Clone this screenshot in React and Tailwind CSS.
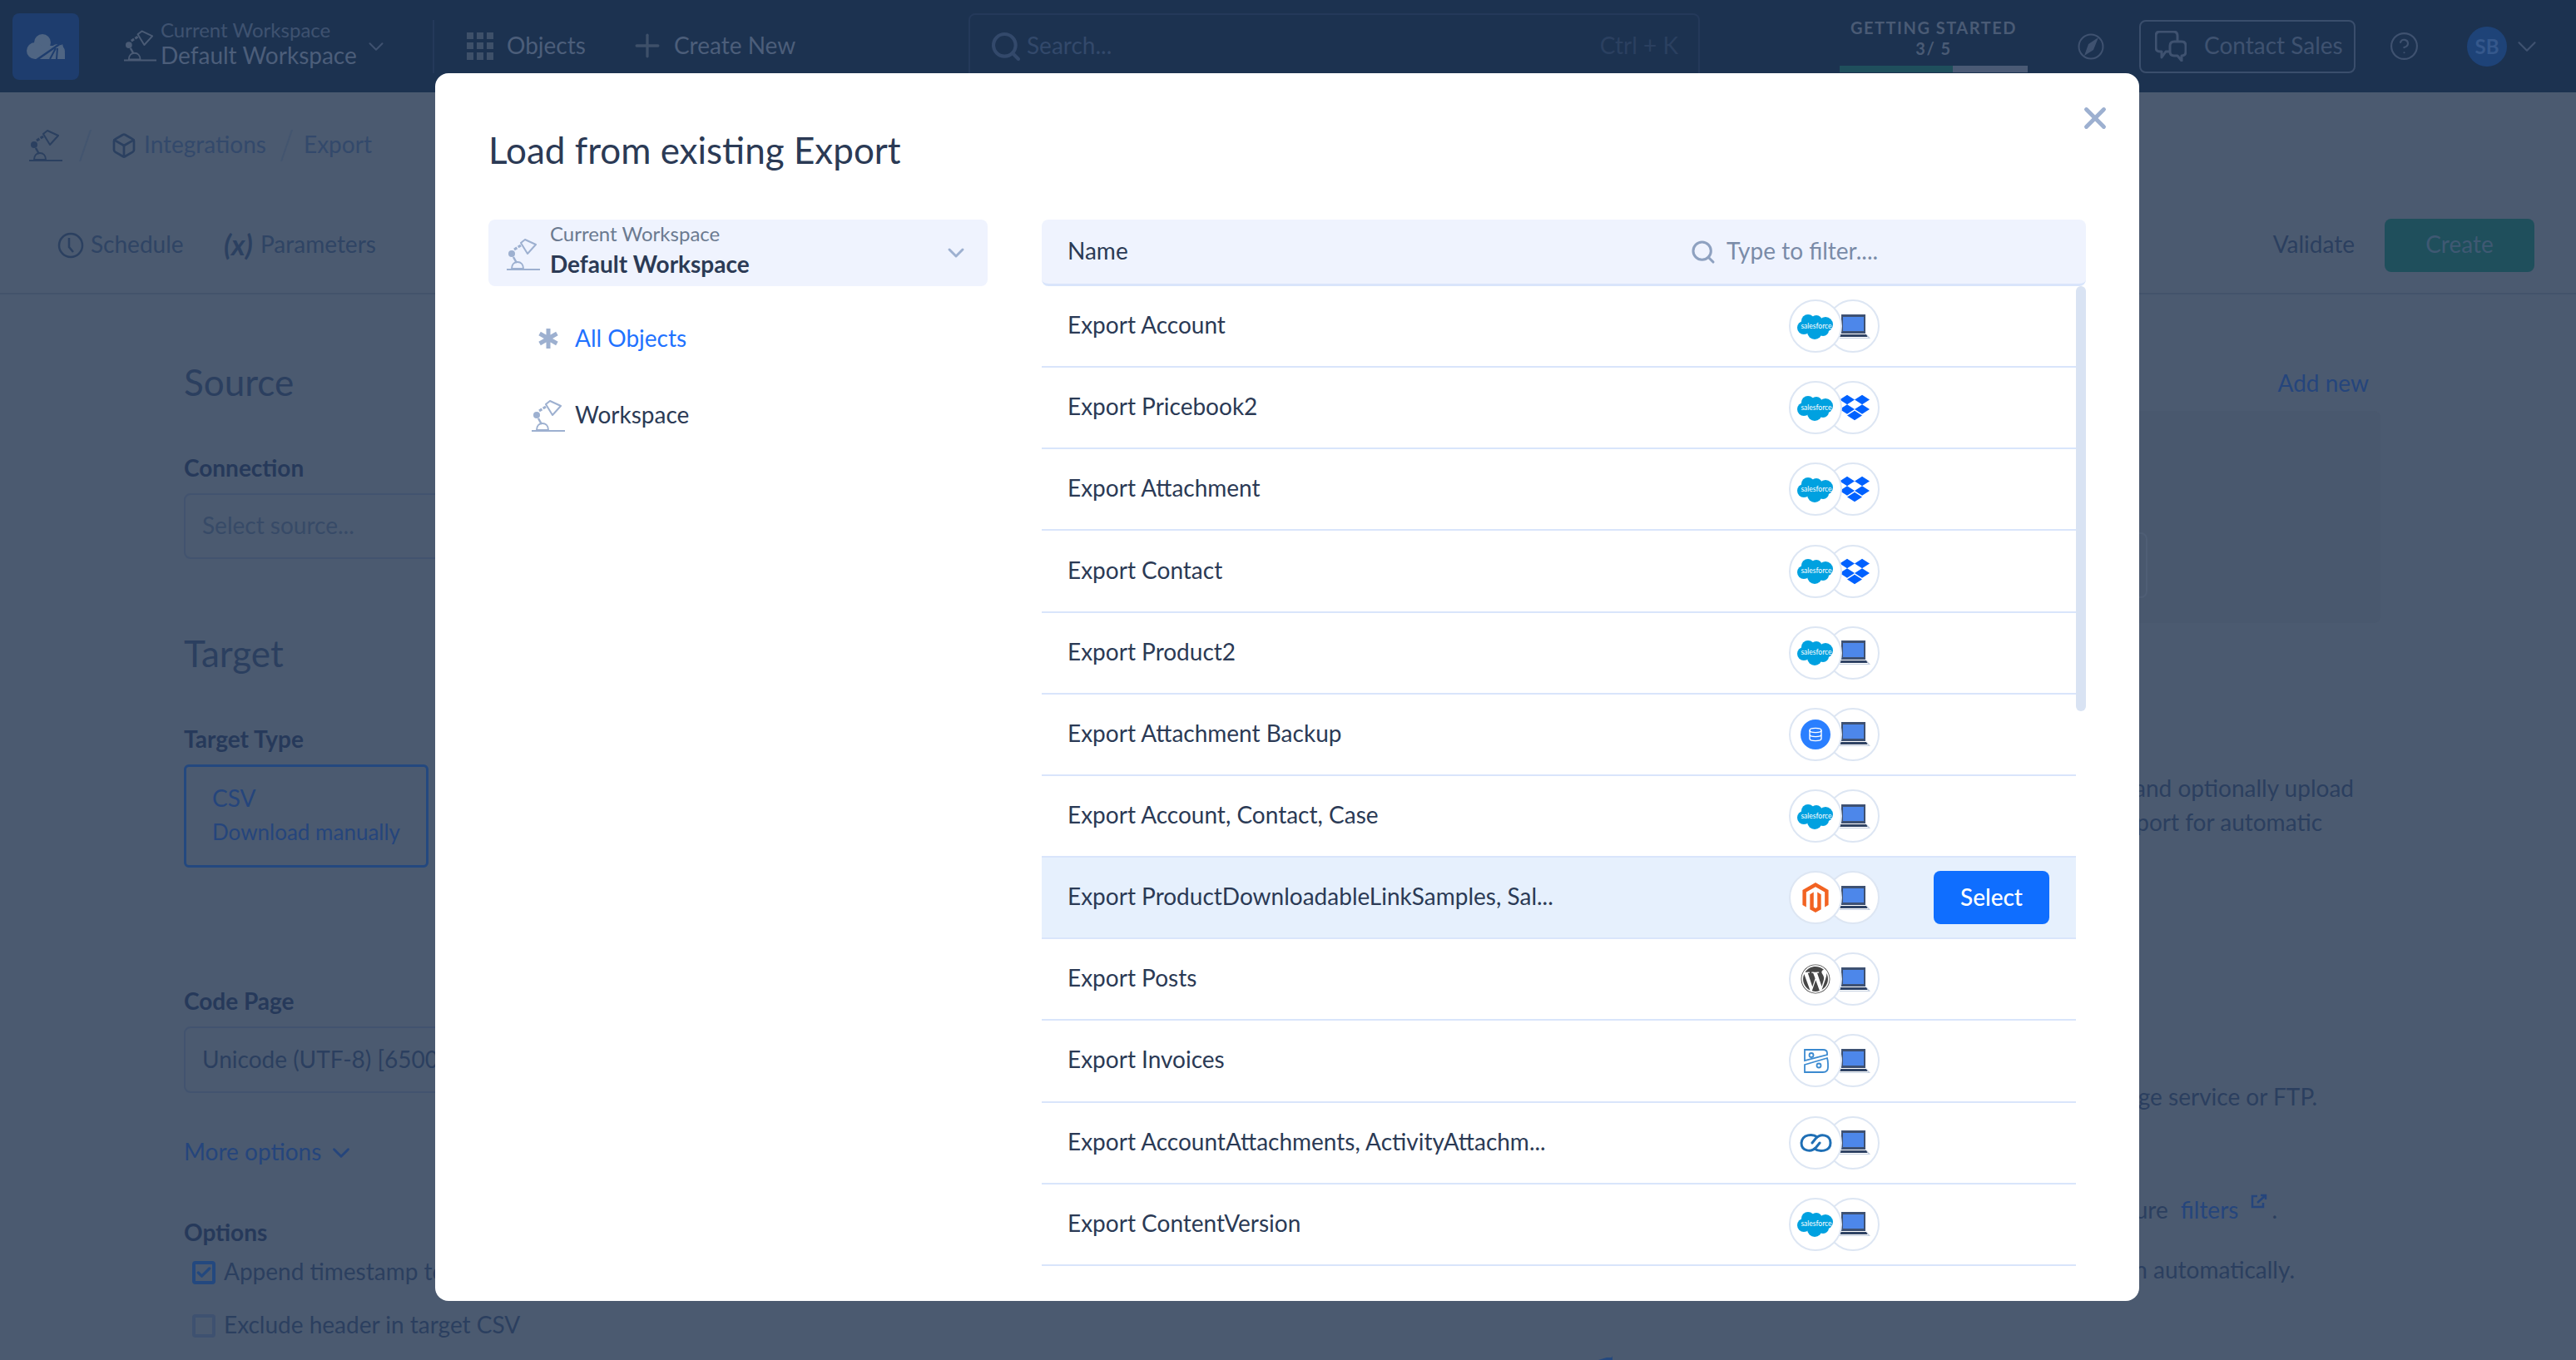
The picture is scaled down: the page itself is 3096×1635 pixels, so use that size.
import React from 'react';
import { ChevronDown, Search, Plus, CircleHelp, Box, X, Check } from 'lucide-react';
import { SiDropbox, SiMagento } from 'react-icons/si';
import { FaWordpress } from 'react-icons/fa';

const Lamp = ({ className }) => (
  <svg viewBox="0 0 40 38" className={className} fill="none">
    <path d="M0 37h40" stroke="currentColor" strokeWidth="2" />
    <path d="M6 36c0-5 3-8 7-8s7 3 7 8z" stroke="currentColor" strokeWidth="2" />
    <path d="M8 22l4 7" stroke="currentColor" strokeWidth="2.5" />
    <circle cx="6" cy="18" r="4" fill="currentColor" />
    <path d="M9 13l8-5" stroke="currentColor" strokeWidth="3" strokeDasharray="4 1.5" />
    <path d="M17 5l5-4 13 6-10 11z" stroke="currentColor" strokeWidth="2" strokeLinejoin="round" />
  </svg>
);

const Salesforce = () => (
  <svg viewBox="0 0 44 31" className="w-[44px] h-[31px]">
    <g fill="#00a1e0">
      <circle cx="13" cy="9" r="8" />
      <circle cx="23" cy="9" r="7" />
      <circle cx="34" cy="13" r="9" />
      <circle cx="8" cy="17" r="8" />
      <circle cx="21" cy="22" r="9" />
      <circle cx="31" cy="20" r="7" />
    </g>
    <text x="23" y="17.5" textAnchor="middle" fontSize="8.500" fill="#fff" fontFamily="Lato, sans-serif">salesforce</text>
  </svg>
);

const Laptop = () => (
  <svg viewBox="0 0 37 29" className="w-[37px] h-[29px]">
    <path d="M2 0h29v23H2z" fill="#3e5172" />
    <path d="M4 3h25v17H4z" fill="#4d87ea" />
    <path d="M1 24h31l2 3H0z" fill="#2f4364" />
    <path d="M32 23l5 6H0v-1h34z" fill="#c5d0e0" />
  </svg>
);

const Database = () => (
  <div className="w-[36px] h-[36px] rounded-full bg-[#2a7fff] flex items-center justify-center">
    <svg viewBox="0 0 20 20" className="w-[20px] h-[20px]" fill="none" stroke="#fff" strokeWidth="1.4">
      <ellipse cx="10" cy="5" rx="7" ry="2.6" />
      <path d="M3 5v10c0 1.5 3 2.6 7 2.6s7-1.100 7-2.600V5M3 10c0 1.500 3 2.600 7 2.600s7-1.100 7-2.600" />
    </svg>
  </div>
);

const Zoho = () => (
  <svg viewBox="0 0 31 31" className="w-[31px] h-[31px]" fill="none" stroke="#3b8ad0" strokeWidth="1.8">
    <path d="M2 2h22q5 0 5 4v2L2 15z" />
    <path d="M2 20l27-8q1 3 1 7v4q0 6-6 6H2z" />
    <circle cx="10" cy="8.500" r="2.500" />
    <circle cx="19" cy="21" r="2.500" />
  </svg>
);

const Chain = () => (
  <svg viewBox="0 0 39 24" className="w-[39px] h-[24px]" fill="none" stroke="#1f6fb5" strokeWidth="3" strokeLinecap="round">
    <path d="M21 5C16 1 3 1 2 12c0 10 12 12 18 5l4-5" />
    <path d="M18 19c5 4 19 4 19-7C37 2 25 0 19 7l-4 5" />
  </svg>
);

const logos = {
  salesforce: <Salesforce />,
  dropbox: <SiDropbox className="w-[36px] h-[36px] text-[#0061ff]" />,
  laptop: <Laptop />,
  database: <Database />,
  magento: <SiMagento className="w-[36px] h-[42px] text-[#f26322]" />,
  wordpress: <FaWordpress className="w-[36px] h-[36px] text-[#464646]" />,
  zoho: <Zoho />,
  chain: <Chain />,
};

const rows = [
  ['Export Account', 'salesforce', 'laptop'],
  ['Export Pricebook2', 'salesforce', 'dropbox'],
  ['Export Attachment', 'salesforce', 'dropbox'],
  ['Export Contact', 'salesforce', 'dropbox'],
  ['Export Product2', 'salesforce', 'laptop'],
  ['Export Attachment Backup', 'database', 'laptop'],
  ['Export Account, Contact, Case', 'salesforce', 'laptop'],
  ['Export ProductDownloadableLinkSamples, Sal...', 'magento', 'laptop', true],
  ['Export Posts', 'wordpress', 'laptop'],
  ['Export Invoices', 'zoho', 'laptop'],
  ['Export AccountAttachments, ActivityAttachm...', 'chain', 'laptop'],
  ['Export ContentVersion', 'salesforce', 'laptop'],
];

const Row = ({ name, from, to, selected }) => (
  <div className={`flex items-center h-[98.17px] pl-[32px] border-b-2 border-[#d9e5fb] ${selected ? 'bg-[#e6f0fd]' : ''}`}>
    <div className="w-[866px] pb-[4px] -ml-[1px] text-[28px] text-[#2b3a55] whitespace-nowrap">{name}</div>
    <div className="flex w-[109px] ml-[1px]">
      <div className="relative z-10 w-[64px] h-[64px] rounded-full border-2 border-[#dde6f3] bg-white flex items-center justify-center shrink-0">
        {logos[from]}
      </div>
      <div className="-ml-[19px] w-[64px] h-[64px] rounded-full border-2 border-[#dde6f3] bg-white flex items-center justify-center shrink-0 pl-[4px]">
        {logos[to]}
      </div>
    </div>
    {selected && (
      <button className="ml-[65px] w-[139px] h-[64px] rounded-lg bg-[#0f6eff] text-white text-[28px] font-medium pb-[3px]">Select</button>
    )}
  </div>
);

const Label = ({ children, className = '' }) => (
  <div className={`h-[34px] pb-[3px] flex items-center text-[28px] font-bold text-[#26395a] ${className}`}>{children}</div>
);

const Heading = ({ children, className = '' }) => (
  <div className={`h-[54px] pb-[2px] flex items-center text-[44px] text-[#2b3f5f] ${className}`}>{children}</div>
);

const Slash = () => (
  <svg viewBox="0 0 15 38" className="w-[15px] h-[38px]">
    <path d="M14 0L1 38" stroke="#43556f" strokeWidth="2" />
  </svg>
);

const Header = () => (
  <header className="h-[111px] flex items-center bg-[#1c3250] shrink-0">
    <div className="ml-[15px] w-[80px] h-[80px] rounded-lg bg-[#1e3d6e] flex items-center justify-center pt-[1px]">
      <svg viewBox="0 0 46 30" className="w-[46px] h-[30px]">
        <g fill="#4f6583">
          <circle cx="19" cy="10" r="10" />
          <circle cx="10" cy="20" r="10" />
          <circle cx="37" cy="21" r="9" />
          <path d="M10 14h27v16H10z" />
        </g>
        <path d="M12 31L44 9" stroke="#1e3d6e" strokeWidth="2.500" />
        <path d="M43 12l5 19H22z" fill="#4f6583" />
        <path d="M28 30l7-13M36 30l1-13" stroke="#1e3d6e" strokeWidth="2" />
      </svg>
    </div>
    <Lamp className="ml-[54px] mb-[2px] w-[39px] h-[38px] text-[#4a5b75]" />
    <div className="ml-[5px] w-[235px] pb-[7px] whitespace-nowrap">
      <div className="text-[24px] leading-[28px] text-[#3f5270]">Current Workspace</div>
      <div className="text-[28px] leading-[32px] text-[#4c5e7a]">Default Workspace</div>
    </div>
    <ChevronDown className="ml-[9px] w-[30px] h-[30px] text-[#3f5270] shrink-0" strokeWidth={1.600} />
    <div className="ml-[53px] w-[2px] h-[64px] bg-[#24395a]" />
    <div className="ml-[39px] mb-[1px] w-[32px] h-[33px] grid grid-cols-3 gap-[4px]">
      {Array.from({ length: 9 }).map((_, i) => (
        <div key={i} className="bg-[#3e5069]" />
      ))}
    </div>
    <div className="ml-[16px] w-[95px] pb-[4px] text-[28px] text-[#4c5e7a] whitespace-nowrap">Objects</div>
    <Plus className="ml-[52px] mb-[1px] w-[44px] h-[44px] text-[#3e5069] shrink-0" strokeWidth={1.800} />
    <div className="ml-[10px] w-[146px] pb-[4px] text-[28px] text-[#4c5e7a] whitespace-nowrap">Create New</div>
    <div className="ml-[208px] w-[879px] h-[80px] rounded-lg border-2 border-[#24395a] flex items-center pl-[23px] pr-[24px]">
      <Search className="w-[40px] h-[40px] text-[#33496b]" strokeWidth={2.500} />
      <span className="ml-[5px] pb-[4px] text-[28px] text-[#33496b]">Search...</span>
      <span className="ml-auto pb-[4px] text-[28px] text-[#2b4060]">Ctrl + K</span>
    </div>
    <div className="ml-[168px] w-[226px] self-start mt-[21px] text-center text-[#4a5b75] font-bold">
      <div className="text-[20px] leading-[25px] tracking-[1.500px] whitespace-nowrap">GETTING STARTED</div>
      <div className="text-[20px] leading-[25px] tracking-[1.500px]">3/ 5</div>
      <div className="mt-[8px] h-[8px] flex bg-[#4a5a75]">
        <div className="w-3/5 bg-[#1f4f5c]" />
      </div>
    </div>
    <svg viewBox="0 0 32 32" className="ml-[60px] w-[32px] h-[32px] text-[#3f5270]" fill="none" stroke="currentColor" strokeWidth="2">
      <circle cx="16" cy="16" r="14.500" />
      <path d="M25 5L19 20l-11 7 5-14z" fill="currentColor" stroke="none" />
    </svg>
    <div className="ml-[42px] w-[260px] h-[64px] rounded-lg border-2 border-[#3a4e6c] flex items-center pl-[17px]">
      <svg viewBox="0 0 38 37" className="w-[38px] h-[37px] text-[#3f5270]" fill="none" stroke="currentColor" strokeWidth="3" strokeLinejoin="round">
        <path d="M18 25h-5l-5 7v-7H6q-5 0-5-5V6q0-5 5-5h16q5 0 5 5v6" />
        <path d="M23 13h9q5 0 5 5v7q0 5-5 5v6l-5-6h-4q-5 0-5-5v-7q0-5 5-5z" />
      </svg>
      <span className="ml-[21px] pb-[4px] text-[28px] text-[#3f5270] whitespace-nowrap">Contact Sales</span>
    </div>
    <CircleHelp className="ml-[40px] w-[37px] h-[37px] text-[#3f5270] shrink-0" strokeWidth={1.400} />
    <div className="ml-[57px] w-[48px] h-[48px] rounded-full bg-[#1e4378] flex items-center justify-center text-[24px] font-bold text-[#35588c] shrink-0">SB</div>
    <ChevronDown className="ml-[5px] w-[38px] h-[38px] text-[#3f5270] shrink-0" strokeWidth={1.400} />
  </header>
);

const Page = () => (
  <>
    <Header />
    <div className="h-[127px] flex items-center text-[28px] text-[#33496b]">
      <Lamp className="ml-[35px] w-[40px] h-[38px] text-[#2b4060]" />
      <div className="ml-[20px]"><Slash /></div>
      <Box className="ml-[23px] w-[32px] h-[34px] text-[#2b4060]" strokeWidth={2} />
      <span className="ml-[8px] w-[147px] pb-[4px] whitespace-nowrap">Integrations</span>
      <div className="ml-[17px]"><Slash /></div>
      <span className="ml-[13px] pb-[4px] whitespace-nowrap">Export</span>
    </div>
    <div className="h-[116px] flex items-center border-b-2 border-[#43536b] text-[28px] text-[#2f4464]">
      <svg viewBox="0 0 32 32" className="ml-[69px] w-[32px] h-[32px]" fill="none" stroke="#2b4060" strokeWidth="2.500">
        <circle cx="16" cy="16" r="14" />
        <path d="M14 7v11l5 6" />
      </svg>
      <span className="ml-[8px] w-[110px] pb-[4px] whitespace-nowrap">Schedule</span>
      <span className="ml-[50px] w-[38px] pb-[4px] text-[34px] font-bold italic text-[#2b4060] whitespace-nowrap">(x)</span>
      <span className="ml-[6px] pb-[4px] whitespace-nowrap">Parameters</span>
      <span className="ml-auto pb-[4px] whitespace-nowrap text-[#2b3f5f]">Validate</span>
      <button className="ml-[36px] mr-[50px] w-[180px] h-[64px] pb-[4px] rounded-lg bg-[#1f4f5c] text-[#3f5973]">Create</button>
    </div>
    <div className="flex">
      <div className="w-[2000px] pl-[221px] pt-[79px] shrink-0">
        <Heading>Source</Heading>
        <Label className="mt-[59px]">Connection</Label>
        <div className="mt-[13px] w-[1000px] h-[79px] pb-[3px] rounded-lg border-2 border-[#42536f] flex items-center pl-[20px] text-[28px] text-[#374a67]">Select source...</div>
        <Heading className="mt-[87px]">Target</Heading>
        <Label className="mt-[59px]">Target Type</Label>
        <div className="mt-[13px] w-[294px] h-[124px] rounded-md border-[3px] border-[#23487f] pl-[31px] pt-[17px] text-[#25457c] whitespace-nowrap">
          <div className="text-[28px] leading-[41px]">CSV</div>
          <div className="text-[26px] leading-[41px]">Download manually</div>
        </div>
        <Label className="mt-[144px]">Code Page</Label>
        <div className="mt-[13px] w-[1000px] h-[80px] pb-[3px] rounded-lg border-2 border-[#42536f] flex items-center pl-[20px] text-[28px] text-[#2b3f5f]">Unicode (UTF-8) [65001]</div>
        <div className="mt-[55px] h-[34px] flex items-center text-[28px] text-[#25457c]">
          <span className="pb-[4px]">More options</span>
          <ChevronDown className="ml-[7px] w-[34px] h-[34px]" strokeWidth={2} />
        </div>
        <Label className="mt-[62px]">Options</Label>
        <div className="mt-[14px] h-[34px] flex items-center pl-[10px] text-[28px] text-[#2b3f5f]">
          <div className="w-[28px] h-[28px] rounded-[4px] border-4 border-[#23487f] flex items-center justify-center">
            <Check className="w-[22px] h-[22px] text-[#23487f]" strokeWidth={4} />
          </div>
          <span className="ml-[10px] pb-[4px] whitespace-nowrap">Append timestamp to file name</span>
        </div>
        <div className="mt-[30px] h-[34px] flex items-center pl-[10px] text-[28px] text-[#2b3f5f]">
          <div className="w-[28px] h-[28px] rounded-[4px] border-4 border-[#3e5170]" />
          <span className="ml-[10px] pb-[4px] whitespace-nowrap">Exclude header in target CSV</span>
        </div>
      </div>
      <div className="w-[861px] pt-[90px] text-[28px] text-[#2b3f5f] whitespace-nowrap shrink-0">
        <div className="h-[34px] pb-[3px] flex items-center justify-end pr-[14px] text-[#25457c]">Add new</div>
        <div className="mt-[16px] h-[255px] rounded-lg bg-[#49586e] pt-[146px] pr-[280px]">
          <div className="h-[79px] rounded-lg border-2 border-[#4f5e75]" />
        </div>
        <div className="mt-[178px] leading-[41px] text-right pr-[32px]">and optionally upload</div>
        <div className="leading-[41px] text-right pr-[70px]">export for automatic</div>
        <div className="mt-[289px] leading-[41px] text-right pr-[76px]">storage service or FTP.</div>
        <div className="mt-[94px] h-[41px] flex items-center justify-end pr-[124px]">
          <span>configure</span>
          <span className="ml-[15px] text-[#25457c]">filters</span>
          <svg viewBox="0 0 20 18" className="ml-[15px] mb-[20px] w-[20px] h-[18px]" fill="none" stroke="#25457c" strokeWidth="2.500">
            <path d="M8 3H2v13h13v-5M8 11L18 2M12 2h6v5" />
          </svg>
          <span className="ml-[5px]">.</span>
        </div>
        <div className="mt-[32px] leading-[41px] text-right pr-[103px]">run automatically.</div>
      </div>
    </div>
  </>
);

const Modal = () => (
  <div className="relative w-[2048px] h-[1476px] rounded-2xl bg-white px-[64px] pt-[67px] overflow-hidden">
    <X className="absolute top-[33px] right-[32px] w-[42px] h-[42px] text-[#9db0d0]" strokeWidth={2.800} />
    <div className="h-[54px] pb-[4px] flex items-center text-[44px] text-[#2b3a55]">Load from existing Export</div>
    <div className="mt-[55px] flex">
      <div className="w-[600px] shrink-0">
        <div className="h-[80px] rounded-lg bg-[#eff3fe] flex items-center pl-[22px] pr-[22px]">
          <Lamp className="w-[40px] h-[38px] text-[#9db0d0] mt-[4px]" />
          <div className="ml-[12px] flex-1 pb-[4px] whitespace-nowrap">
            <div className="text-[24px] leading-[30px] text-[#6b7a90]">Current Workspace</div>
            <div className="text-[28px] leading-[42px] font-bold text-[#2b3a55]">Default Workspace</div>
          </div>
          <ChevronDown className="w-[32px] h-[32px] text-[#9db0d0]" strokeWidth={2.200} />
        </div>
        <div className="mt-[46px] h-[34px] flex items-center pl-[52px]">
          <div className="w-[40px] flex justify-center">
            <svg viewBox="0 0 26 26" className="w-[26px] h-[26px] text-[#9db0d0]" fill="none" stroke="currentColor" strokeWidth="5">
              <path d="M13 1v24M2.600 7l20.800 12M23.400 7L2.600 19" />
            </svg>
          </div>
          <span className="ml-[12px] pb-[2px] text-[28px] text-[#1f72ff]">All Objects</span>
        </div>
        <div className="mt-[59px] h-[34px] flex items-center pl-[52px]">
          <Lamp className="w-[40px] h-[38px] text-[#9db0d0]" />
          <span className="ml-[12px] pb-[4px] text-[28px] text-[#2b3a55]">Workspace</span>
        </div>
      </div>
      <div className="ml-[65px] flex-1 min-w-0">
        <div className="h-[80px] rounded-lg bg-[#eff3fe] border-b-[3px] border-[#d9e5fb] flex items-center pl-[31px] text-[28px]">
          <span className="w-[748px] pb-[3px] text-[#2b3a55]">Name</span>
          <Search className="w-[32px] h-[32px] text-[#8ea1c0]" strokeWidth={2.300} />
          <span className="ml-[12px] pb-[3px] text-[#7a8ba8] whitespace-nowrap">Type to filter....</span>
        </div>
        <div className="flex items-start">
          <div className="w-[1243px]">
            {rows.map(([name, from, to, selected]) => (
              <Row key={name} name={name} from={from} to={to} selected={selected} />
            ))}
          </div>
          <div className="w-[12px] h-[511px] rounded-full bg-[#d9e3f3]" />
        </div>
      </div>
    </div>
  </div>
);

export default function App() {
  return (
    <div className="relative w-[3096px] h-[1635px] overflow-hidden bg-[#4b5a70] font-[Lato,sans-serif]">
      <Page />
      <svg viewBox="0 0 18 5" className="absolute left-[1921px] top-[1630px] w-[18px] h-[5px]" fill="#23487f">
        <path d="M0 5l10-3h6l1-2v5z" />
      </svg>
      {/* dialog over the dimmed page */}
      <div className="absolute inset-0 pt-[88px] pl-[523px]">
        <Modal />
      </div>
    </div>
  );
}
